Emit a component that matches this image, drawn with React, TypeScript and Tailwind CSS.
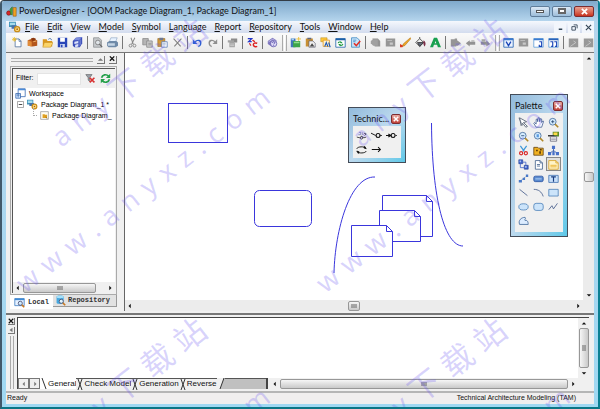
import type { ReactNode } from 'react'
import clsx from 'clsx'

type IconName = keyof typeof icons

// Small 14x14 drawings shared by the toolbar, the tree and the palettes
const icons = {
  newFile: (
    <>
      <path d="M4 2.500h5l2.500 2.500v7.500H4z" fill="#fff" stroke="#4f6f9c" />
      <path d="M9 2.500v3h2.500" fill="none" stroke="#4f6f9c" />
      <path d="M3 0v6M0 3h6M1 1l4 4M5 1L1 5" stroke="#e8b923" />
    </>
  ),
  project: (
    <>
      <path d="M1 4l6-2 6 2v7l-6 1-6-1z" fill="#b4561c" />
      <path d="M1 4l5 2v6l-5-1z" fill="#e08b38" />
      <path d="M5 2l3-1 3 1v2l-4 1z" fill="#8a3810" />
      <path d="M8 6l4-1" stroke="#ffc878" />
    </>
  ),
  open: (
    <>
      <path d="M1 3h5l1 2h6v7H1z" fill="#d9971e" />
      <path d="M3 7h11l-3 6H1z" fill="#fbd468" stroke="#c08a1c" strokeWidth=".6" />
      <path d="M8 3c2-2 4-1 4 1" fill="none" stroke="#3565a8" />
    </>
  ),
  save: (
    <>
      <path d="M1 1h12v12H1z" fill="#2946b8" />
      <path d="M4 1h6v5H4z" fill="#fff" />
      <path d="M4 9h6v4H4z" fill="#cfd8f2" />
      <path d="M5 10h2v3H5z" fill="#2946b8" />
    </>
  ),
  saveAll: (
    <>
      <path d="M5 1l8-1v8l-3 5H3L1 11V5z" fill="#3a4cb8" />
      <path d="M5 1l8-1-4 4H2z" fill="#7c8cdc" />
      <path d="M3 6l5-1v3l-5 1zM4 10l4-1v3l-4 1z" fill="#dce2fa" />
      <path d="M9 4v8M11 3v7" stroke="#9aa8e8" strokeWidth=".7" />
    </>
  ),
  preview: (
    <>
      <path d="M2 1h7l3 3v9H2z" fill="#c6c9cc" stroke="#8d9194" />
      <circle cx="7.500" cy="7" r="3" fill="#dfe4e8" stroke="#777" />
      <path d="M9.500 9l3.500 4" stroke="#666" strokeWidth="1.500" />
    </>
  ),
  print: (
    <>
      <path d="M5 1h8l-2 5H3z" fill="#e8f3ff" stroke="#7e99b8" strokeWidth=".7" />
      <path d="M0 7l3-2h9l2 2v4l-3 2H2l-2-2z" fill="#6f8aa8" />
      <path d="M1 8h9v3H1z" fill="#c5d5e5" />
    </>
  ),
  scissorsGray: (
    <>
      <path d="M5 1l3 8M10 1L6 9" stroke="#888" strokeWidth="1.300" />
      <circle cx="4.500" cy="11" r="1.800" fill="none" stroke="#777" />
      <circle cx="9.500" cy="11" r="1.800" fill="none" stroke="#777" />
    </>
  ),
  copy: (
    <>
      <path d="M1 2h7v8H1z" fill="#b5b5b5" stroke="#888" />
      <path d="M6 5h7v8H6z" fill="#ccc" stroke="#888" />
      <path d="M8 8h4M8 10h4" stroke="#888" />
    </>
  ),
  paste: (
    <>
      <path d="M1 2h9v10H1z" fill="#d69a35" stroke="#8a6020" strokeWidth=".7" />
      <path d="M3 1h5v3H3z" fill="#6e7890" />
      <path d="M6 6h7v7H6z" fill="#fff" stroke="#5c7eb8" />
      <path d="M7 8h4M7 10h4" stroke="#5c7eb8" strokeWidth=".7" />
    </>
  ),
  cross: <path d="M2 2l9 10M12 2L3 12" stroke="#808080" strokeWidth="1.300" />,
  undo: (
    <>
      <path d="M4 6c3-3 8-2 7 3-.5 2-2 3-3 3" fill="none" stroke="#2c5fd0" strokeWidth="1.800" />
      <path d="M1 3v6h6z" fill="#2c5fd0" />
    </>
  ),
  redo: (
    <>
      <path d="M10 6c-3-3-8-2-7 3 .5 2 2 3 3 3" fill="none" stroke="#8f8f8f" strokeWidth="1.800" />
      <path d="M13 3v6H7z" fill="#8f8f8f" />
    </>
  ),
  props: (
    <>
      <path d="M5 2h8v5H5z" fill="#8b8b8b" />
      <path d="M1 4h8v3H1zM3 7h7v6H3z" fill="#a3a3a3" />
      <path d="M4 9h5M4 11h5" stroke="#d5d5d5" />
    </>
  ),
  convert: (
    <>
      <path d="M1 2h5L2 6h4" fill="none" stroke="#2437c8" strokeWidth="1.600" />
      <path d="M7 4l3 2M13 8c-3-1-5 0-5 2 0 2 3 3 5 2" fill="none" stroke="#dc2020" strokeWidth="1.800" />
      <path d="M3 8l2 3" stroke="#dc2020" strokeWidth="1.500" />
    </>
  ),
  help: (
    <>
      <path d="M1 5l6-4 5 3v6l-5 3-6-4z" fill="#8078c0" />
      <path d="M2 6l5-3 4 2" stroke="#d0ccf0" fill="none" />
      <circle cx="8.500" cy="8.500" r="4" fill="#dcd8f6" stroke="#5048a0" strokeWidth=".8" />
      <path d="M7 7.500c0-2 3-2 3-.2 0 1-1.500 1-1.500 2M8.500 10.500v1" fill="none" stroke="#4038a0" />
    </>
  ),
  modelNew: (
    <>
      <path d="M1 2h6v11H1z" fill="#3f76b8" />
      <path d="M4 5h9v8H4z" fill="#3ca548" />
      <path d="M5 6h7v2H5z" fill="#8fdc8c" />
      <path d="M11 0v5M8 2.500h6" stroke="#e8b923" />
      <path d="M2 3h3" stroke="#a8d0f4" strokeWidth="2" />
    </>
  ),
  pasteModel: (
    <>
      <path d="M1 2h9v10H1z" fill="#c88f32" />
      <path d="M3 1h5v2H3z" fill="#606880" />
      <path d="M5 5h5l3 3v5H5z" fill="#eee" stroke="#556" strokeWidth=".8" />
      <path d="M6 12l3-4 3 4z" fill="#4a4a4a" />
    </>
  ),
  findModel: (
    <>
      <path d="M1 1h8v5H1z" fill="#ffc83a" stroke="#b08018" strokeWidth=".6" />
      <path d="M4 4h8v8H4z" fill="#fff3d0" stroke="#e09820" />
      <path d="M6 12l2-5 2 5M11 7l2 6" fill="none" stroke="#1c58b8" strokeWidth="1.400" />
    </>
  ),
  refreshModel: (
    <>
      <path d="M1 2h12v11H1z" fill="#fff" stroke="#1c60a8" />
      <path d="M1 2h12v2H1z" fill="#1c60a8" />
      <path d="M4 8c0-2 3-2 4-1M10 9c0 2-3 2-4 1" fill="none" stroke="#19963a" strokeWidth="1.300" />
      <path d="M7 5v3h3zM7 12V9H4z" fill="#19963a" />
    </>
  ),
  checkModel: (
    <>
      <path d="M2 1h7l3 3v9H2z" fill="#c8e4fa" stroke="#3886c0" />
      <path d="M4 4h4M4 6h3" stroke="#3886c0" />
      <path d="M5 8l3 3 5-6" fill="none" stroke="#e03028" strokeWidth="2" />
    </>
  ),
  grayLayers: (
    <>
      <path d="M3 2h7l3 3v7H6z" fill="#929292" />
      <path d="M1 5l3-2h6v8H4l-3-3z" fill="#a0a0a0" />
    </>
  ),
  grayWindow: (
    <>
      <path d="M1 2h12v10H1z" fill="#969696" />
      <path d="M3 4h6v1H3zM6 7h4v3H6z" fill="#c8c8c8" />
    </>
  ),
  pencil: (
    <>
      <path d="M13 1l1 1-8 9-3 1 1-3z" fill="#f0a828" stroke="#9c6410" strokeWidth=".6" />
      <path d="M0 9l4 2-1 2H0z" fill="#d83c20" />
    </>
  ),
  bucket: (
    <>
      <path d="M1 7l5-5 5 5-5 5z" fill="#eee" stroke="#333" />
      <path d="M6 2V0M3 7h8l-5 5z" stroke="#333" fill="#606878" />
      <path d="M11 4c3 2 3 6 1 8-1-2-2-4-1-8z" fill="#7c3048" />
    </>
  ),
  letter: (
    <path d="M5 1h4l5 12h-4l-1-3H5l-1 3H0zM6 8h2L7 5z" fill="#18a050" />
  ),
  grayFwd: <path d="M1 3h5v-1h3v2l5 4-4 3H8v1H1z" fill="#959595" />,
  grayLeft: (
    <>
      <path d="M1 8l5-4v2h7v4H6v2z" fill="#929292" />
      <path d="M8 4h4v2H8z" fill="#b5b5b5" />
    </>
  ),
  grayRight: (
    <>
      <path d="M13 9L8 4v2H1v4h7v2z" fill="#929292" />
      <path d="M2 3h5v3H2z" fill="#a5a5a5" />
    </>
  ),
  viewV: (
    <>
      <path d="M1 2h12v11H1z" fill="#eaf2ff" stroke="#1b5cae" />
      <path d="M1 2h12v2H1z" fill="#3a7bd0" />
      <path d="M4 6l3 5 3-5" fill="none" stroke="#1b47b8" strokeWidth="1.700" />
    </>
  ),
  viewOne: (
    <>
      <path d="M1 2h12v11H1z" fill="#fff" stroke="#5c9bd8" />
      <path d="M1 2h12v2H1z" fill="#3a7bd0" />
      <path d="M8 6h3v6H8v-2" fill="none" stroke="#1b47b8" strokeWidth="1.500" />
    </>
  ),
  viewTwo: (
    <>
      <path d="M1 2h12v11H1z" fill="#fff" stroke="#5c9bd8" />
      <path d="M1 2h12v2H1z" fill="#2a62b8" />
      <path d="M3 6h3v6H4M8 6h3v6H9" fill="none" stroke="#1b47b8" strokeWidth="1.500" />
    </>
  ),
  grayCheck: (
    <>
      <path d="M1 2h12v11H1z" fill="#989898" />
      <path d="M7 5l3 2-7 5" fill="none" stroke="#d0d0d0" />
    </>
  ),
  model: (
    <>
      <path d="M0 1h8v6H0z" fill="#3f93b8" />
      <path d="M1 2h6v3H1z" fill="#a5dcec" />
      <path d="M3 5h6v4H3z" fill="#4872a8" />
      <circle cx="9.500" cy="9.500" r="3" fill="#ffe08a" stroke="#c88c18" strokeWidth="1.500" />
      <circle cx="9.500" cy="9.500" r="1" fill="#a8660c" />
    </>
  ),
  workspace: (
    <>
      <path d="M4 1h9v10H4z" fill="#fff" stroke="#3a6ab0" />
      <path d="M4 1h9v2H4z" fill="#4a8ad8" />
      <path d="M1 7h6v6H1z" fill="#d8eaff" stroke="#3a6ab0" />
      <path d="M2 9h4M4 7v5" stroke="#3a6ab0" />
    </>
  ),
  diagram: (
    <>
      <path d="M1 1h12v12H1z" fill="#fffdf2" stroke="#888" />
      <path d="M4 5h3l1 1h3v5H4z" fill="#e0a020" />
      <path d="M9 9l2 3" stroke="#7c5210" />
    </>
  ),
  clearFilter: (
    <>
      <path d="M1 2h8L6 6v5L4 9V6z" fill="#9aa0a8" stroke="#555" strokeWidth=".7" />
      <path d="M6 6l6 6M12 6l-6 6" stroke="#d83030" strokeWidth="2" />
    </>
  ),
  refresh: (
    <>
      <path d="M2 6c1-4 6-5 9-2M12 8c-1 4-6 5-9 2" fill="none" stroke="#24a04a" strokeWidth="2.200" />
      <path d="M13 1v5.500H7.500zM1 13V7.500h5.500z" fill="#24a04a" />
    </>
  ),
  localTab: (
    <>
      <path d="M1 2h12v9H1z" fill="#e5f1ff" stroke="#3c7ac0" />
      <path d="M1 2h12v2H1z" fill="#3c8ad8" />
      <circle cx="8" cy="8" r="2.600" fill="#cdeaff" stroke="#446" />
      <path d="M10 10l3 3" stroke="#c87820" strokeWidth="2" />
    </>
  ),
  repoTab: (
    <>
      <path d="M2 2c0-2 9-2 9 0v8c0 2-9 2-9 0z" fill="#45a8e0" />
      <ellipse cx="6.500" cy="2.500" rx="4.500" ry="1.500" fill="#a5e0fa" />
      <circle cx="8" cy="8" r="2.600" fill="#e0f5ff" stroke="#446" />
      <path d="M10 10l3 3" stroke="#c87820" strokeWidth="2" />
    </>
  ),
  pointer: (
    <>
      <path d="M2 1l9 5-4 1 5 5-2 1-4-5-2 3z" fill="#fff" stroke="#4a5568" />
      <path d="M1 1l5 10" stroke="#4a5568" strokeWidth=".7" />
    </>
  ),
  hand: (
    <path d="M4 13L1 8l1-1 2 2V3l1.500-.5L6 6l.5-5H8l.5 5L9.500 2 11 2.500V7l1.500-2 1 .5L11 13z" fill="#fff" stroke="#2c4a88" strokeWidth=".9" />
  ),
  zoomIn: (
    <>
      <circle cx="6" cy="6" r="4.300" fill="#d6edff" stroke="#3c6496" />
      <path d="M4 6h4M6 4v4" stroke="#20406c" />
      <path d="M9 9l4 4" stroke="#b08828" strokeWidth="2" />
    </>
  ),
  zoomOut: (
    <>
      <circle cx="6" cy="6" r="4.300" fill="#d6edff" stroke="#3c6496" />
      <path d="M4 6h4" stroke="#20406c" />
      <path d="M9 9l4 4" stroke="#b08828" strokeWidth="2" />
    </>
  ),
  zoomPage: (
    <>
      <circle cx="6" cy="6" r="4.300" fill="#d6edff" stroke="#3c6496" />
      <path d="M4.500 4h3v4h-3z" fill="#5b9be0" />
      <path d="M9 9l4 4" stroke="#b08828" strokeWidth="2" />
    </>
  ),
  properties: (
    <>
      <path d="M6 1h8v6H6z" fill="#5c8c28" />
      <path d="M7 2h5v3H7z" fill="#ffd84a" />
      <path d="M0 5h8v2H0z" fill="#3c3c3c" />
      <path d="M3 7h8v6H3z" fill="#fff" stroke="#667" />
      <path d="M4 9h6M4 11h6" stroke="#889" />
    </>
  ),
  scissors: (
    <>
      <path d="M3 1l5 7M11 1L6 8" stroke="#3f98d8" strokeWidth="1.600" />
      <circle cx="4" cy="10.500" r="2" fill="none" stroke="#d82828" strokeWidth="1.500" />
      <circle cx="10" cy="10.500" r="2" fill="none" stroke="#d82828" strokeWidth="1.500" />
    </>
  ),
  package: (
    <>
      <path d="M1 3h5l1 1h6v9H1z" fill="#f0b020" stroke="#604010" />
      <path d="M4 6h2v2H4zM8 8h2v3H8zM9 5h2v2H9z" fill="#503408" />
    </>
  ),
  tree: (
    <>
      <path d="M7 4v3M7 7L3 10M7 7l4 3M7 7v3" stroke="#2850a8" />
      <path d="M5 1h4v4H5zM0 9h4v4H0zM5.500 9h3v4h-3zM10 9h4v4h-4z" fill="#4870c8" />
    </>
  ),
  link: (
    <>
      <path d="M1 1h5v5H1zM8 8h5v5H8z" fill="#3c60c8" stroke="#1c3890" strokeWidth=".7" />
      <path d="M6 4h4v4M3 6v5h5" fill="none" stroke="#3c60c8" />
      <path d="M2 2h2v2H2zM9 9h2v2H9z" fill="#a8bcf0" />
    </>
  ),
  file: (
    <>
      <path d="M3 2h6l3 3v8H3z" fill="#fff" stroke="#3c5c88" />
      <path d="M9 2v3h3M5 7h4M5 9h4" fill="none" stroke="#3c5c88" />
    </>
  ),
  note: (
    <>
      <path d="M1 2h9l3 3v8H1z" fill="#fff4c8" stroke="#d8a020" />
      <path d="M3 8h8M3 10h8" stroke="#e8a818" />
      <path d="M10 2v3h3" fill="none" stroke="#d8a020" />
    </>
  ),
  linkNote: (
    <>
      <path d="M3 10L11 4" stroke="#3c64a0" strokeDasharray="2 1" />
      <path d="M1 9h4v3H1zM6 6h3v3H6zM10 2h3v3h-3z" fill="#4878c8" />
    </>
  ),
  title: (
    <>
      <rect x="1" y="4" width="12" height="7" rx="2" fill="#5c8cd0" stroke="#2850a0" />
      <path d="M3 7.500h8" stroke="#c8e0ff" />
    </>
  ),
  text: (
    <>
      <path d="M1 3h12v9H1z" fill="#c8e0fa" stroke="#4070b0" />
      <path d="M4 5h6M7 5v6" stroke="#183c80" strokeWidth="1.500" />
    </>
  ),
  line: <path d="M2 3l10 8" stroke="#3c5484" />,
  arc: <path d="M1 3c6 0 10 3 12 9" fill="none" stroke="#3c5484" />,
  rect: <path d="M1 3h12v8.500H1z" fill="#cce4fa" stroke="#4a80b8" />,
  ellipse: <ellipse cx="7" cy="7.500" rx="6" ry="4" fill="#cce4fa" stroke="#4a80b8" />,
  roundRect: <rect x="1" y="3" width="12" height="9" rx="3" fill="#cce4fa" stroke="#4a80b8" />,
  polyline: <path d="M1 11l4-5 2 4 5-7" fill="none" stroke="#3c5484" />,
  polygon: <path d="M2 12c-2-5 2-9 7-9 2 2-2 3 0 4 3-1 4 2 4 5z" fill="#dcecff" stroke="#3c6496" />,
  extLink: (
    <>
      <path d="M1 9l4 1 2-2 3 2 3-1" fill="none" stroke="#222" />
      <path d="M4 3h2v3M8 3v3h2M3 6h3" fill="none" stroke="#7070b8" />
      <circle cx="7" cy="10" r="1.500" fill="#fff" stroke="#222" />
      <path d="M10 4l3 1-2 2" stroke="#222" fill="none" />
    </>
  ),
  requireLink: (
    <>
      <path d="M0 4l6 3" stroke="#111" strokeWidth="1.200" />
      <circle cx="9" cy="7" r="2.500" fill="none" stroke="#111" strokeWidth="1.400" />
      <path d="M11 7h3" stroke="#111" />
    </>
  ),
  provideLink: (
    <>
      <path d="M0 7h5M3 5l3 2-3 2" fill="none" stroke="#111" strokeWidth="1.400" />
      <circle cx="9" cy="7" r="2.500" fill="none" stroke="#111" strokeWidth="1.400" />
      <path d="M12 7h2" stroke="#111" />
    </>
  ),
  loop: (
    <>
      <path d="M1 6c1-3 10-3 11-1M13 9c-1 3-10 3-11 1" fill="none" stroke="#111" strokeWidth="1.200" />
      <path d="M11 3l2 3-3-1zM3 12l-2-3 3 1z" fill="#111" stroke="#111" />
    </>
  ),
  arrow: <path d="M1 7h11M9 4l3 3-3 3" fill="none" stroke="#111" strokeWidth="1.300" />,
  logo: (
    <>
      <circle cx="3.500" cy="9" r="2.800" fill="#d62828" stroke="#701010" strokeWidth=".7" />
      <path d="M5 4l3-3v10H6z" fill="#46a83c" stroke="#245c20" strokeWidth=".6" />
      <path d="M9 2h4v11H9z" fill="#f0a020" stroke="#7c4c10" strokeWidth=".6" />
    </>
  ),
}

function Icon({ name, className = 'size-[11px]' }: { name: IconName; className?: string }) {
  return (
    <svg viewBox="0 0 14 14" className={clsx('shrink-0', className)} aria-hidden="true">
      {icons[name]}
    </svg>
  )
}

const toolbar: (IconName | '|' | '||')[] = [
  'newFile', 'project', 'open', 'save', 'saveAll', '|',
  'preview', 'print', '|',
  'scissorsGray', 'copy', 'paste', 'cross', '|',
  'undo', 'redo', '|', 'props', '|', 'convert', '|', 'help', '||',
  'modelNew', 'pasteModel', 'findModel', 'refreshModel', 'checkModel', '|',
  'grayLayers', 'grayWindow', 'pencil', 'bucket', 'letter', '|',
  'grayFwd', 'grayLeft', 'grayRight', '||',
  'viewV', 'grayWindow', 'viewOne', 'viewTwo', '|', 'grayCheck', 'grayCheck',
]

const menus = ['File', 'Edit', 'View', 'Model', 'Symbol', 'Language', 'Report', 'Repository', 'Tools', 'Window', 'Help']

const paletteTools: IconName[] = [
  'pointer', 'hand', 'zoomIn',
  'zoomOut', 'zoomPage', 'properties',
  'scissors', 'package', 'tree',
  'link', 'file', 'note',
  'linkNote', 'title', 'text',
  'line', 'arc', 'rect',
  'ellipse', 'roundRect', 'polyline',
  'polygon',
]

const technicalTools: IconName[] = ['extLink', 'requireLink', 'provideLink', 'loop', 'arrow']

type Direction = 'up' | 'down' | 'left' | 'right'

const arrowPaths: Record<Direction, string> = {
  up: 'M1 6l3-3 3 3z',
  down: 'M1 3l3 3 3-3z',
  left: 'M5 1v6L2 4z',
  right: 'M3 1v6l3-3z',
}

function ScrollArrow({ dir }: { dir: Direction }) {
  return (
    <button aria-label={`Scroll ${dir}`} className="flex size-[10px] shrink-0 items-center justify-center">
      <svg viewBox="0 0 8 8" className="size-[6px]">
        <path d={arrowPaths[dir]} fill="#111" />
      </svg>
    </button>
  )
}

function Thumb({ vertical, className }: { vertical?: boolean; className?: string }) {
  return (
    <div
      className={clsx(
        'flex items-center justify-center rounded-xs border border-[#979797]',
        vertical ? 'w-[10px] bg-linear-to-r' : 'h-[10px] bg-linear-to-b',
        'from-[#f6f6f6] to-[#c9c9c9]',
        className,
      )}
    >
      <svg viewBox="0 0 6 6" className={clsx('size-[6px]', vertical && 'rotate-90')}>
        <path d="M1 1v4M3 1v4M5 1v4" stroke="#666" />
      </svg>
    </div>
  )
}

function Toolbar() {
  return (
    <div className="flex h-5 shrink-0 items-center border-b border-[#777] bg-linear-to-b from-[#fafafa] to-[#e9e9e9] pl-1">
      {toolbar.map((item, i) => {
        if (item === '|') {
          return (
            <div key={i} className="flex w-[5px] shrink-0 justify-center">
              <div className="h-[13px] w-px bg-[#777]" />
            </div>
          )
        }
        if (item === '||') {
          return (
            <div key={i} className="flex w-2 shrink-0 justify-center gap-px">
              <div className="h-4 w-px bg-[#aaa]" />
              <div className="h-4 w-px bg-white" />
              <div className="h-4 w-px bg-[#aaa]" />
            </div>
          )
        }
        return (
          <button key={i} aria-label={item} className="flex w-[15px] shrink-0 justify-center">
            <Icon name={item} />
          </button>
        )
      })}
    </div>
  )
}

function BrowserPanel() {
  return (
    <aside className="flex w-[118px] shrink-0 flex-col bg-[#f0f0f0] pr-[7px] pl-1">
      <div className="flex h-[13px] items-center gap-1">
        <div className="ml-px h-1 flex-1 border-y border-[#aaa]" />
        <button aria-label="Pin" className="flex size-2 items-center justify-center border-r border-b border-[#777]">
          <svg viewBox="0 0 8 8" className="size-2">
            <path d="M1 6l3-3 3 3z" fill="#777" />
          </svg>
        </button>
        <button aria-label="Close panel" className="flex size-2 items-center justify-center border-r border-b border-[#777]">
          <svg viewBox="0 0 8 8" className="size-2">
            <path d="M1 1l5 5M6 1L1 6" stroke="#111" strokeWidth="1.500" />
          </svg>
        </button>
      </div>

      <div className="flex min-h-0 flex-1 flex-col border border-[#aaa] p-px">
        <div className="flex min-h-0 flex-1 flex-col border-t border-l border-[#555] bg-[#f0f0f0]">
          <div className="flex h-[19px] shrink-0 items-center pl-[3px]">
            <label htmlFor="filter" className="w-[21px] text-[7px]">Filter:</label>
            <input id="filter" className="h-3 w-11 border border-[#e4e4e4] bg-white text-[7px]" />
            <button aria-label="Clear filter" className="ml-1"><Icon name="clearFilter" /></button>
            <button aria-label="Refresh" className="ml-1"><Icon name="refresh" /></button>
          </div>
          <ul className="min-h-0 flex-1 overflow-hidden bg-white pl-[2px] text-[7px] leading-[11px] whitespace-nowrap">
            <li className="flex items-center gap-[3px]">
              <Icon name="workspace" />Workspace
            </li>
            <li className="flex items-center gap-[3px] pl-[2px]">
              <svg viewBox="0 0 8 8" className="size-[7px] shrink-0">
                <path d="M.5 .5h7v7h-7z" fill="#fff" stroke="#999" />
                <path d="M2 4h4" stroke="#333" />
              </svg>
              <Icon name="model" />Package Diagram_1 *
            </li>
            <li className="flex items-center gap-[3px] pl-[18px]">
              <span className="-mt-2 h-2 w-1 shrink-0 border-b border-l border-dotted border-[#aaa]" />
              <Icon name="diagram" className="size-[9px]" />Package Diagram_
            </li>
          </ul>
          <div className="flex h-[11px] shrink-0 items-center bg-[#f0f0f0]">
            <ScrollArrow dir="left" />
            <Thumb className="w-[73px]" />
            <div className="flex-1" />
            <ScrollArrow dir="right" />
          </div>
        </div>
      </div>

      <div className="flex h-4 shrink-0 items-start font-['Liberation_Mono',monospace] text-[7px] font-bold text-[#333]">
        <button className="flex h-[14px] w-[43px] items-center gap-[3px] bg-white pl-1">
          <Icon name="localTab" />Local
        </button>
        <button className="flex h-3 flex-1 items-center gap-[2px] border-r border-b border-[#999] bg-[#e2e2e2] pl-[2px]">
          <Icon name="repoTab" />Repository
        </button>
      </div>
    </aside>
  )
}

interface FloatingProps {
  title: string
  tools: IconName[]
  className?: string
}

function FloatingPalette({ title, tools, className }: FloatingProps) {
  return (
    <section
      className={clsx(
        'absolute flex w-[58px] flex-col border border-[#444c58] bg-linear-to-br from-[#93bbdc] via-[#bcd9ee] to-[#5cc8e8] px-1 pb-1',
        className,
      )}
    >
      <header className="flex h-[18px] shrink-0 items-center justify-between pt-1 font-[Lato,sans-serif] text-[9px] text-[#111]">
        <span>{title}</span>
        <button aria-label={`Close ${title}`} className="flex size-[10px] items-center justify-center rounded-xs border border-[#7c2c30] bg-linear-to-b from-[#e8a8a0] to-[#c04038]">
          <svg viewBox="0 0 8 8" className="size-[6px]">
            <path d="M1 1l6 6M7 1L1 7" stroke="#fff" strokeWidth="2" />
          </svg>
        </button>
      </header>
      <div className="grid flex-1 auto-rows-[14px] grid-cols-[repeat(3,15px)] content-start bg-[#f0f0f0] pt-[2px] pl-px">
        {tools.map((tool) => (
          <button
            key={tool}
            aria-label={tool}
            className={clsx('flex items-center justify-center', tool === 'note' && 'border border-[#888] bg-[#e0e0e0]')}
          >
            <Icon name={tool} />
          </button>
        ))}
      </div>
    </section>
  )
}

function NoteShape({ x, y, w, h }: { x: number; y: number; w: number; h: number }) {
  return (
    <>
      <path d={`M${x} ${y}h${w - 6}l6 6v${h - 6}h${-w}z`} fill="#fff" />
      <path d={`M${x + w - 6} ${y}v6h6`} />
    </>
  )
}

function Canvas() {
  return (
    <main className="flex min-w-0 flex-1 flex-col border-l border-[#666] bg-white">
      <div className="flex min-h-0 flex-1">
        <div className="relative min-w-0 flex-1 overflow-hidden">
          <svg width="458" height="245" fill="none" stroke="#3a36dc" className="max-w-none">
            <rect x="43.500" y="50.500" width="59" height="39" />
            <rect x="129.500" y="137.500" width="57" height="36" rx="5" />
            <path d="M209 220C210 177 225 123 250 124" />
            <path d="M306.500 70C307 147 320 193 338 193" />
            <NoteShape x={257.5} y={142.5} w={50} h={41} />
            <NoteShape x={254.5} y={157.5} w={41} h={31} />
            <NoteShape x={226.5} y={172.5} w={41} h={31} />
          </svg>
          <FloatingPalette title="Technic..." tools={technicalTools} className="top-[54px] left-[223px] h-[56px]" />
          <FloatingPalette title="Palette" tools={paletteTools} className="top-[41px] left-[385px] h-[143px]" />
        </div>
        <div className="flex w-[11px] shrink-0 flex-col items-center bg-[#ececec]">
          <ScrollArrow dir="up" />
          <div className="flex-1" />
          <div className="size-[10px] rounded-xs border border-[#979797] bg-linear-to-r from-[#f6f6f6] to-[#c9c9c9]" />
          <div className="flex-1" />
          <ScrollArrow dir="down" />
        </div>
      </div>
      <div className="flex h-[11px] shrink-0 items-center bg-[#ececec] pr-[11px]">
        <ScrollArrow dir="left" />
        <div className="flex-1" />
        <Thumb className="w-3" />
        <div className="flex-1" />
        <ScrollArrow dir="right" />
      </div>
    </main>
  )
}

const outputTabs = ['General', 'Check Model', 'Generation', 'Reverse']

function OutputPanel() {
  return (
    <section className="flex h-[78px] shrink-0 border-t-2 border-[#777] bg-[#f0f0f0] pt-[2px] pr-[5px] pb-[2px]">
      <div className="flex w-[11px] shrink-0 flex-col items-center gap-[2px]">
        <button aria-label="Close output" className="mt-px size-[7px] border-r border-b border-[#777]">
          <svg viewBox="0 0 8 8" className="size-[6px]">
            <path d="M1 1l6 6M7 1L1 7" stroke="#111" strokeWidth="1.500" />
          </svg>
        </button>
        <button aria-label="Collapse output" className="size-[7px] border-r border-b border-[#777]">
          <svg viewBox="0 0 8 8" className="size-[6px]">
            <path d="M6 1v6L2 4z" fill="#777" />
          </svg>
        </button>
        <div className="w-1 flex-1 border-x border-[#aaa]" />
      </div>
      <div className="flex min-w-0 flex-1 flex-col border-t border-l border-[#444] bg-white">
        <div className="flex min-h-0 flex-1">
          <div className="flex-1" />
          <div className="flex w-[11px] flex-col items-center bg-[#f0f0f0]">
            <ScrollArrow dir="up" />
            <Thumb vertical className="flex-1" />
            <ScrollArrow dir="down" />
          </div>
        </div>
        <div className="flex h-[11px] shrink-0 bg-[#f0f0f0] text-[8px] text-[#111]">
          <button aria-label="Previous tab" className="flex w-[11px] items-center justify-center border border-[#777]">
            <svg viewBox="0 0 8 8" className="size-[6px]"><path d={arrowPaths.left} fill="#777" /></svg>
          </button>
          <button aria-label="Next tab" className="flex w-[11px] items-center justify-center border border-[#777]">
            <svg viewBox="0 0 8 8" className="size-[6px]"><path d={arrowPaths.right} fill="#777" /></svg>
          </button>
          <div className="flex w-[228px] shrink-0 items-stretch border-r-2 border-[#444] bg-[#c0c0c0]">
            {outputTabs.map((tab, i) => (
              <button key={tab} className={clsx('flex shrink-0 items-center leading-[10px]', i === 0 ? 'bg-white' : 'border-t border-[#555] bg-[#f0f0f0]')}>
                <svg viewBox="0 0 8 11" className="h-[11px] w-2">
                  <path d={i === 0 ? 'M2 0l4 11' : 'M6 0L2 11M2 0l4 11'} fill="none" stroke="#333" />
                </svg>
                {tab}
              </button>
            ))}
            <svg viewBox="0 0 8 11" className="h-[11px] w-2">
              <path d="M0 0h7L3 11H0z" fill="#f0f0f0" />
              <path d="M7 0L3 11" stroke="#333" />
            </svg>
            <div className="flex-1 border-t border-[#555]" />
          </div>
          <div className="flex min-w-0 flex-1 items-center pl-[2px]">
            <ScrollArrow dir="left" />
            <Thumb className="flex-1" />
            <ScrollArrow dir="right" />
            <div className="w-[11px]" />
          </div>
        </div>
      </div>
    </section>
  )
}

function WatermarkLine({ text, className }: { text: string; className: string }) {
  return (
    <div className={clsx('absolute flex h-8 origin-left -rotate-38 items-center gap-[9px] text-[27px] leading-8', className)}>
      {text.split('').map((char, i) => (
        <span key={i} className={clsx(char > '\u4e00' && 'text-[32px]')}>{char}</span>
      ))}
    </div>
  )
}

function Watermark() {
  return (
    <div
      aria-hidden="true"
      className="pointer-events-none absolute inset-0 overflow-hidden font-['Noto_Sans','Noto_Sans_CJK_SC',sans-serif] text-[#6450f0]/25"
    >
      <WatermarkLine text="www.anyxz.com" className="top-[269px] left-[17px]" />
      <WatermarkLine text="www.anyxz.com" className="top-[269px] left-[317px]" />
      <WatermarkLine text="any下载站" className="top-[123px] left-[53px]" />
      <WatermarkLine text="any下载站" className="top-[123px] left-[353px]" />
      <WatermarkLine text="any下载站" className="top-[423px] left-[53px]" />
      <WatermarkLine text="any下载站" className="top-[423px] left-[353px]" />
      <WatermarkLine text="www.anyxz.com" className="top-[569px] left-[17px]" />
      <WatermarkLine text="www.anyxz.com" className="top-[569px] left-[317px]" />
    </div>
  )
}

function TitleBar() {
  return (
    <header className="flex h-5 shrink-0 items-center font-[Lato,sans-serif] text-[9px] text-[#111]">
      <Icon name="logo" />
      <h1 className="ml-[2px] flex-1 truncate">PowerDesigner - [OOM Package Diagram_1, Package Diagram_1]</h1>
      <div className="flex gap-[2px]">
        <button aria-label="Minimize" className="flex h-[11px] w-5 items-center justify-center rounded-xs border border-[#5f7d9a] bg-linear-to-b from-[#dbe9f6] to-[#9dbdd9]">
          <span className="h-[3px] w-2 border border-[#555] bg-white" />
        </button>
        <button aria-label="Maximize" className="flex h-[11px] w-5 items-center justify-center rounded-xs border border-[#5f7d9a] bg-linear-to-b from-[#dbe9f6] to-[#9dbdd9]">
          <span className="h-[6px] w-2 border-2 border-[#666] bg-white" />
        </button>
        <button aria-label="Close" className="flex h-[11px] w-5 items-center justify-center rounded-xs border border-[#7c2c30] bg-linear-to-b from-[#e8a090] to-[#c8301c]">
          <svg viewBox="0 0 8 8" className="size-[7px]">
            <path d="M1 1l6 6M7 1L1 7" stroke="#fff" strokeWidth="2" />
          </svg>
        </button>
      </div>
    </header>
  )
}

function MenuBar() {
  return (
    <nav className="flex h-3 shrink-0 items-center gap-2 bg-linear-to-b from-[#f5f8fd] to-[#d3dcee] pl-[3px] font-[Lato,sans-serif] text-[9px] leading-3 text-[#111]">
      <Icon name="model" className="-mr-1 size-[12px]" />
      {menus.map((menu) => (
        <button key={menu}>
          <span className="underline">{menu[0]}</span>
          {menu.slice(1)}
        </button>
      ))}
      <div className="ml-auto flex gap-[2px]">
        <button aria-label="Minimize document" className="flex size-3 items-center justify-center bg-[#f2f6fc]">
          <svg viewBox="0 0 8 8" className="size-[7px]"><path d="M2 6h4" stroke="#345" strokeWidth="1.500" /></svg>
        </button>
        <button aria-label="Restore document" className="flex size-3 items-center justify-center bg-[#f2f6fc]">
          <svg viewBox="0 0 8 8" className="size-[7px]"><path d="M3 1h4v4M1 3h4v4H1z" fill="none" stroke="#345" /></svg>
        </button>
        <button aria-label="Close document" className="flex size-3 items-center justify-center bg-[#f2f6fc]">
          <svg viewBox="0 0 8 8" className="size-[7px]"><path d="M1 1l6 6M7 1L1 7" stroke="#345" strokeWidth="1.300" /></svg>
        </button>
      </div>
    </nav>
  )
}

function Frame({ children }: { children: ReactNode }) {
  return (
    <div className="relative h-screen overflow-hidden rounded-t-sm border-t border-r-2 border-b-2 border-l-2 border-t-[#333c46] border-r-[#0b7f92] border-b-[#0a7585] border-l-[#41586a] bg-[#b4d6ee] font-['Liberation_Sans',Arial,sans-serif]">
      <div className="flex h-full flex-col bg-linear-to-b from-[#7fa9cc] via-[#b5d5ed] via-[20px] to-[#9fd8f2] px-1 pb-[3px]">
        {children}
      </div>
      <Watermark />
    </div>
  )
}

function App() {
  return (
    <Frame>
      <TitleBar />
      <MenuBar />
      <Toolbar />
      <div className="flex min-h-0 flex-1">
        <BrowserPanel />
        <Canvas />
      </div>
      <div className="h-[2px] shrink-0 bg-[#f0f0f0]" />
      <OutputPanel />
      <footer className="flex h-[13px] shrink-0 items-center justify-between border-t-2 border-[#b5b5b5] bg-[#f0eeee] pr-[18px] pl-px text-[7px] text-[#111]">
        <span>Ready</span>
        <span>Technical Architecture Modeling (TAM)</span>
      </footer>
    </Frame>
  )
}

export default App
